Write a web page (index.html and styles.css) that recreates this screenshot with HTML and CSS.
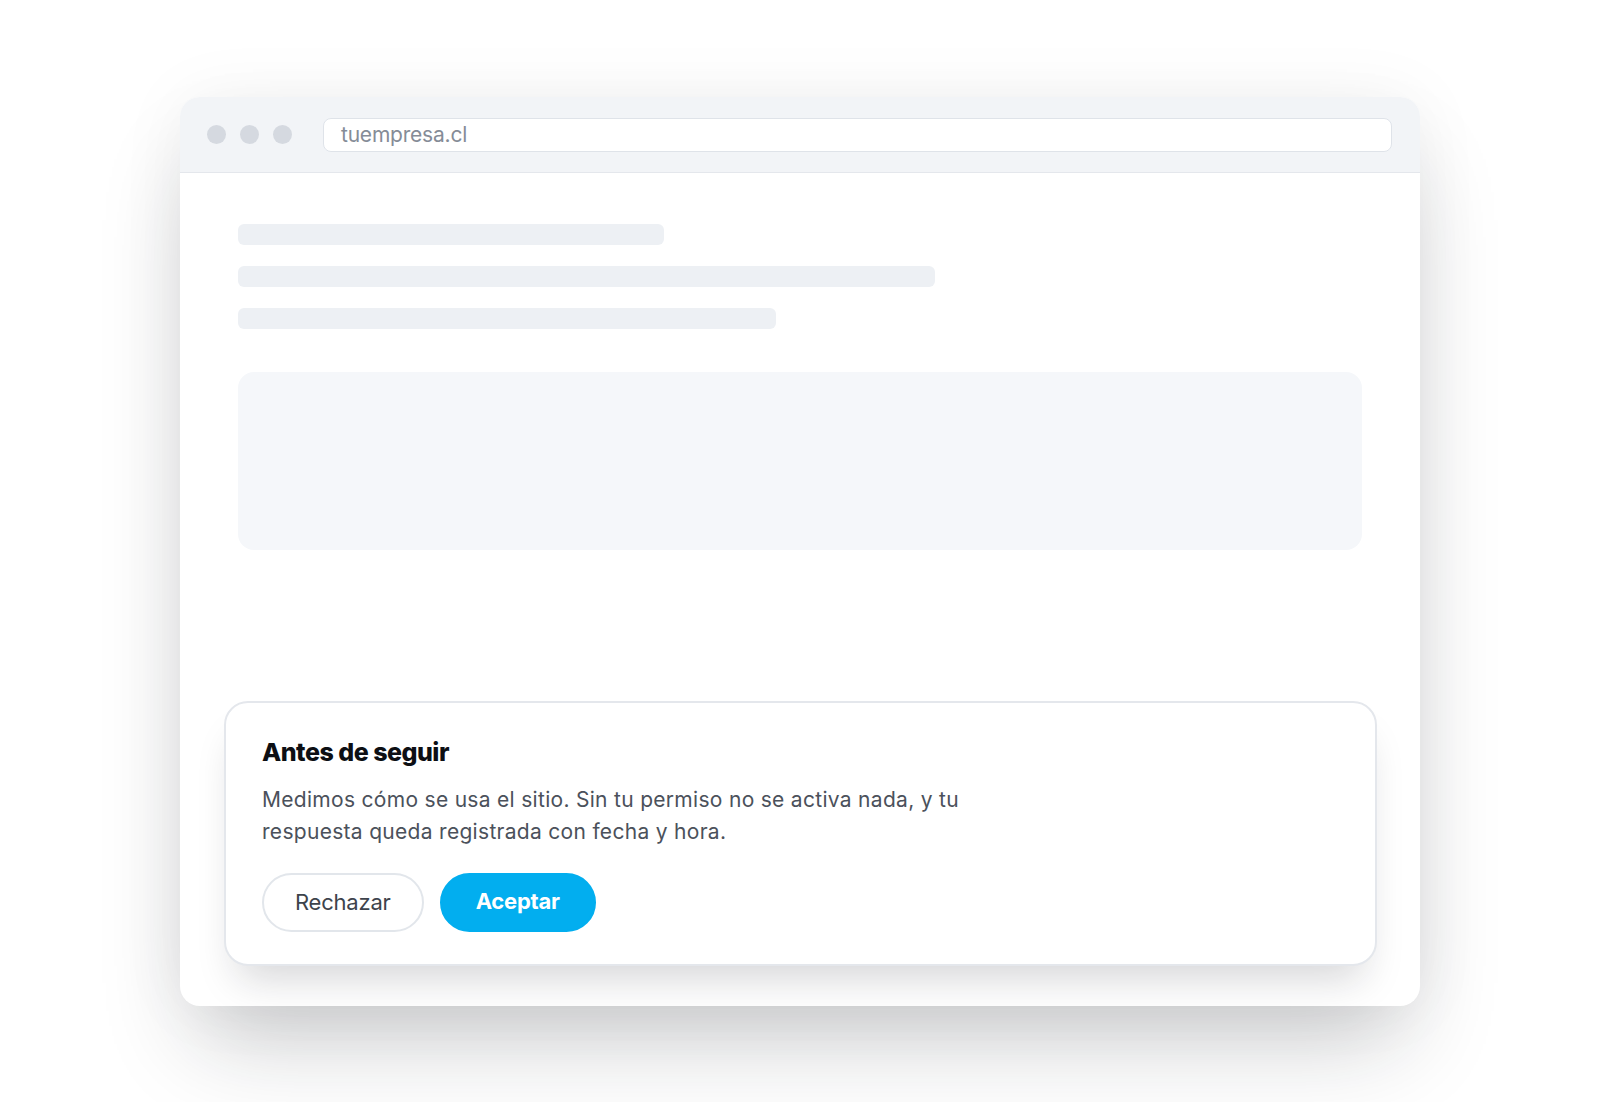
FILE: index.html
```html
<!DOCTYPE html>
<html lang="es">
<head>
  <meta charset="utf-8">
  <title>tuempresa.cl</title>
  <meta name="viewport" content="width=device-width, initial-scale=1.0">
  <link rel="stylesheet" href="styles.css">
</head>
<body>
  <div class="stage">
    <div class="window">
      <div class="titlebar">
        <div class="dots">
          <span class="dot"></span>
          <span class="dot"></span>
          <span class="dot"></span>
        </div>
        <div class="url">tuempresa.cl</div>
      </div>

      <div class="content">
        <div class="skeleton-line line-1"></div>
        <div class="skeleton-line line-2"></div>
        <div class="skeleton-line line-3"></div>
        <div class="skeleton-block"></div>
      </div>

      <!-- consent banner sits on top of the page content -->
      <div class="consent">
        <h2 class="consent-title">Antes de seguir</h2>
        <p class="consent-text">Medimos cómo se usa el sitio. Sin tu permiso no se activa nada, y tu respuesta queda registrada con fecha y hora.</p>
        <div class="consent-actions">
          <button class="btn btn-reject" type="button">Rechazar</button>
          <button class="btn btn-accept" type="button">Aceptar</button>
        </div>
      </div>
    </div>
  </div>
</body>
</html>
```

FILE: styles.css
```css
* {
  box-sizing: border-box;
}
body {
  margin: 0;
  background: #fff;
  font-family: Inter, "Noto Sans", sans-serif;
  color: #0e1116;
}
.stage {
  display: flex;
  justify-content: center;
  padding-top: 97px;
  height: 1102px;
  overflow: hidden;
}
.window {
  position: relative;
  width: 1240px;
  height: 909px;
  background: #fff;
  border-radius: 20px;
  overflow: hidden;
  box-shadow: 0 50px 90px -20px rgba(20,24,32,0.24), 0 0 70px rgba(20,24,32,0.05);
}
.titlebar {
  display: flex;
  align-items: center;
  height: 76px;
  padding: 0 27px;
  background: #f2f4f7;
  border-bottom: 1px solid #e4e7ec;
}
.dots {
  display: flex;
  gap: 14px;
  margin-right: 31px;
}
.dot {
  width: 19px;
  height: 19px;
  border-radius: 50%;
  background: #d5d9e0;
}
.url {
  flex: 1;
  height: 34px;
  line-height: 31px;
  padding-left: 17px;
  margin-right: 1px;
  background: #fff;
  border: 1.5px solid #dfe3e9;
  border-radius: 8px;
  font-size: 21px;
  color: #858c97;
  letter-spacing: -0.01em;
}
.content {
  padding: 51px 58px 0;
}
.skeleton-line {
  height: 21px;
  margin-bottom: 21px;
  border-radius: 6px;
  background: #edf0f4;
}
.line-1 { width: 426px; }
.line-2 { width: 697px; }
.line-3 { width: 538px; }
.skeleton-block {
  margin-top: 43px;
  height: 178px;
  border-radius: 16px;
  background: #f5f7fa;
}
.consent {
  position: absolute;
  left: 44px;
  right: 43px;
  bottom: 40px;
  padding: 34px 36px 32px;
  background: #fff;
  border: 2px solid #e4e7ec;
  border-radius: 24px;
  box-shadow: 0 26px 40px -14px rgba(20,24,32,0.18);
}
.consent-title {
  margin: 0 0 16px;
  font-size: 25px;
  line-height: 31px;
  font-weight: 800;
  letter-spacing: -0.02em;
  color: #0d0f14;
}
.consent-text {
  max-width: 720px;
  margin: 0 0 25px;
  font-size: 21px;
  line-height: 32px;
  color: #4b515b;
  letter-spacing: 0.3px;
}
.consent-actions {
  display: flex;
  gap: 16px;
}
.btn {
  height: 59px;
  padding-bottom: 2px;
  border-radius: 30px;
  font-family: inherit;
  font-size: 22px;
  letter-spacing: -0.01em;
  cursor: pointer;
}
.btn-reject {
  padding-left: 31px;
  padding-right: 31px;
  background: #fff;
  border: 2px solid #e2e6eb;
  color: #3d434c;
}
.btn-accept {
  padding-left: 34px;
  padding-right: 34px;
  padding-bottom: 4px;
  background: #02aeef;
  border: 2px solid #02aeef;
  color: #fff;
  font-weight: 700;
}
```
